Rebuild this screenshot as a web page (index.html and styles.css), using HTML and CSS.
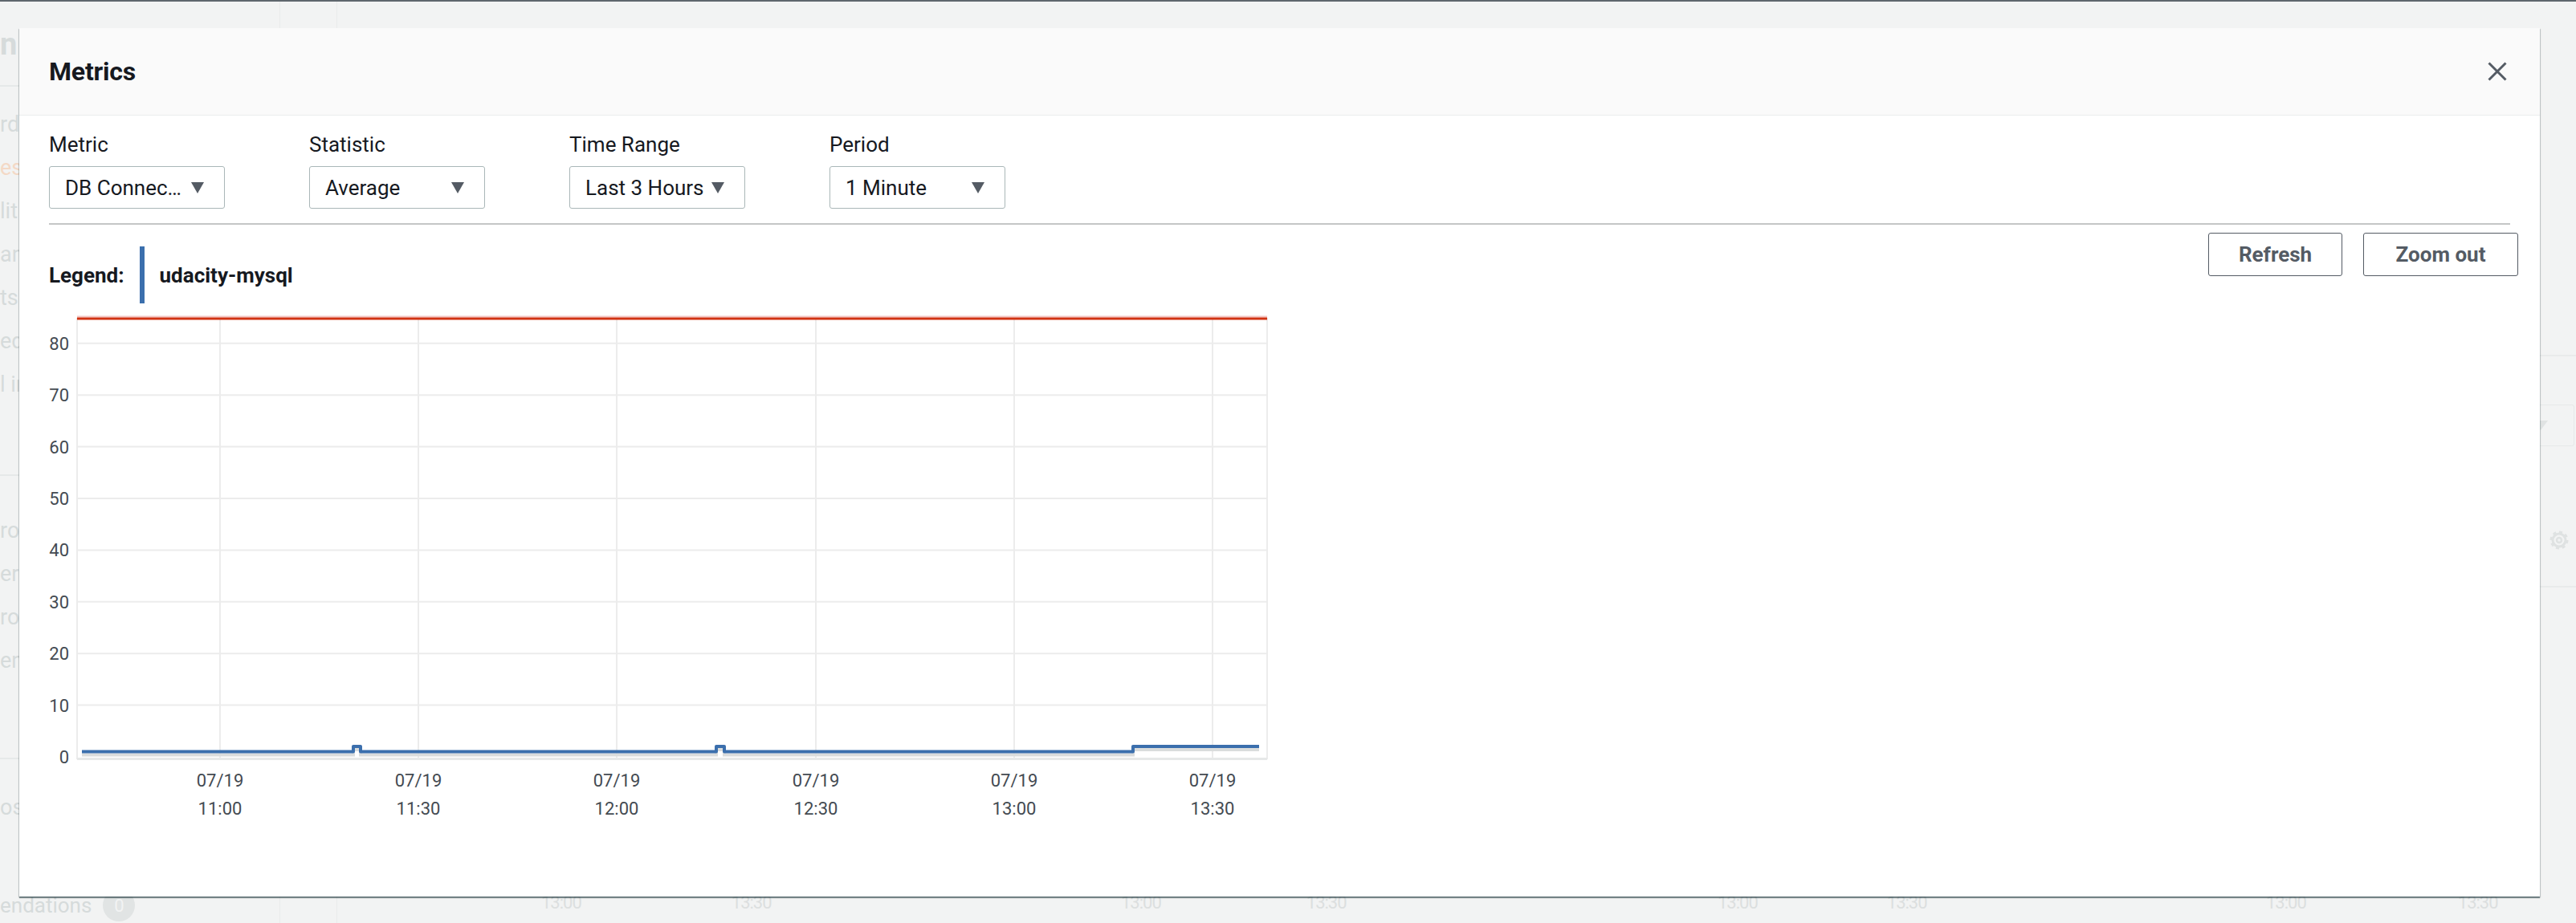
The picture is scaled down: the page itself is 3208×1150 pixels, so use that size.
FILE: index.html
```html
<!DOCTYPE html>
<html lang="en">
<head>
<meta charset="utf-8">
<title>Metrics</title>
<link rel="stylesheet" href="styles.css">
</head>
<body>
<div class="screen">
  <div class="page">
    <div class="side">
      <div class="side-title">n</div>
      <div class="side-group first">
        <div class="side-item">rd</div>
        <div class="side-item orange">es</div>
        <div class="side-item">lit</div>
        <div class="side-item">an</div>
        <div class="side-item">ts</div>
        <div class="side-item">ed</div>
        <div class="side-item">l in</div>
      </div>
      <div class="side-group second">
        <div class="side-item">ro</div>
        <div class="side-item">er</div>
        <div class="side-item">ro</div>
        <div class="side-item">en</div>
      </div>
      <div class="side-group last">
        <div class="side-item">os</div>
      </div>
      <div class="side-bottom"><span>endations</span><span class="badge">0</span></div>
    </div>
    <div class="gutter"></div>
    <div class="main">
      <div class="main-right">
        <div class="bg-dropdown"><span class="bg-caret"></span></div>
        <svg class="bg-gear" width="34" height="34" viewBox="0 0 34 34">
          <circle cx="17" cy="17" r="10" fill="none" stroke="#dfe2e2" stroke-width="3" stroke-dasharray="4 3.8"/>
          <circle cx="17" cy="17" r="8" fill="none" stroke="#dfe2e2" stroke-width="3"/>
          <circle cx="17" cy="17" r="3" fill="none" stroke="#dfe2e2" stroke-width="2.5"/>
        </svg>
      </div>
      <div class="bg-times">
        <div class="bg-panel p1"><span>13:00</span><span>13:30</span></div>
        <div class="bg-panel p2"><span>13:00</span><span>13:30</span></div>
        <div class="bg-panel p3"><span>13:00</span><span>13:30</span></div>
        <div class="bg-panel p4"><span>13:00</span><span>13:30</span></div>
      </div>
    </div>
  </div>

  <div class="modal">
    <div class="modal-header">
      <h2 class="modal-title">Metrics</h2>
      <svg class="close" width="24" height="24" viewBox="0 0 24 24">
        <path d="M1.5 1.5 L22.5 22.5 M22.5 1.5 L1.5 22.5" stroke="#545b64" stroke-width="3" fill="none"/>
      </svg>
    </div>
    <div class="modal-body">
      <div class="filters">
        <div class="field">
          <div class="field-label">Metric</div>
          <div class="select"><span class="select-text">DB Connec…</span><span class="caret"></span></div>
        </div>
        <div class="field">
          <div class="field-label">Statistic</div>
          <div class="select"><span class="select-text">Average</span><span class="caret"></span></div>
        </div>
        <div class="field">
          <div class="field-label">Time Range</div>
          <div class="select"><span class="select-text">Last 3 Hours</span><span class="caret"></span></div>
        </div>
        <div class="field">
          <div class="field-label">Period</div>
          <div class="select"><span class="select-text">1 Minute</span><span class="caret"></span></div>
        </div>
      </div>
      <div class="divider"></div>
      <div class="toolbar">
        <div class="legend">
          <span class="legend-label">Legend:</span>
          <span class="legend-bar"></span>
          <span class="legend-name">udacity-mysql</span>
        </div>
        <div class="buttons">
          <button class="btn btn-refresh">Refresh</button>
          <button class="btn btn-zoom">Zoom out</button>
        </div>
      </div>
      <svg class="chart" width="1530" height="640" viewBox="0 0 1530 640">
        <g stroke="#ececec" stroke-width="2" fill="none">
          <line x1="35" y1="37.8" x2="1517" y2="37.8"/>
          <line x1="35" y1="102.2" x2="1517" y2="102.2"/>
          <line x1="35" y1="166.6" x2="1517" y2="166.6"/>
          <line x1="35" y1="231" x2="1517" y2="231"/>
          <line x1="35" y1="295.4" x2="1517" y2="295.4"/>
          <line x1="35" y1="359.8" x2="1517" y2="359.8"/>
          <line x1="35" y1="424.2" x2="1517" y2="424.2"/>
          <line x1="35" y1="488.6" x2="1517" y2="488.6"/>
          <line x1="213" y1="6" x2="213" y2="556"/>
          <line x1="460" y1="6" x2="460" y2="556"/>
          <line x1="707" y1="6" x2="707" y2="556"/>
          <line x1="955" y1="6" x2="955" y2="556"/>
          <line x1="1202" y1="6" x2="1202" y2="556"/>
          <line x1="1449" y1="6" x2="1449" y2="556"/>
          <line x1="35" y1="6" x2="35" y2="556"/>
          <line x1="1517" y1="6" x2="1517" y2="556"/>
        </g>
        <line x1="35" y1="555.5" x2="1517" y2="555.5" stroke="#e6e8e8" stroke-width="3"/>
        <line x1="35" y1="4.5" x2="1517" y2="4.5" stroke="#f3c6c3" stroke-width="2"/>
        <line x1="35" y1="7" x2="1517" y2="7" stroke="#d13212" stroke-width="3"/>
        <polyline points="41,550.6 379,550.6 379,544 388,544 388,550.6 831,550.6 831,544 841,544 841,550.6 1350,550.6 1350,544 1507,544" fill="none" stroke="#dadcdc" stroke-width="4"/>
        <polyline points="41,546.6 379,546.6 379,540 388,540 388,546.6 831,546.6 831,540 841,540 841,546.6 1350,546.6 1350,540 1507,540" fill="none" stroke="#3b6fad" stroke-width="4" stroke-linejoin="round"/>
        <g class="axis-y" text-anchor="end">
          <text x="25" y="45.5">80</text>
          <text x="25" y="110">70</text>
          <text x="25" y="174.5">60</text>
          <text x="25" y="239">50</text>
          <text x="25" y="303">40</text>
          <text x="25" y="367.5">30</text>
          <text x="25" y="432">20</text>
          <text x="25" y="496.5">10</text>
          <text x="25" y="561">0</text>
        </g>
        <g class="axis-x" text-anchor="middle">
          <text x="213" y="590">07/19</text><text x="213" y="625">11:00</text>
          <text x="460" y="590">07/19</text><text x="460" y="625">11:30</text>
          <text x="707" y="590">07/19</text><text x="707" y="625">12:00</text>
          <text x="955" y="590">07/19</text><text x="955" y="625">12:30</text>
          <text x="1202" y="590">07/19</text><text x="1202" y="625">13:00</text>
          <text x="1449" y="590">07/19</text><text x="1449" y="625">13:30</text>
        </g>
      </svg>
    </div>
  </div>
</div>
</body>
</html>
```

FILE: styles.css
```css
* { box-sizing: border-box; }

html, body {
  margin: 0;
  padding: 0;
}

body {
  width: 3208px;
  height: 1150px;
  overflow: hidden;
  background: #f2f3f3;
  font-family: "Roboto", "Liberation Sans", sans-serif;
  color: #16191f;
}

.screen {
  position: relative;
  width: 3208px;
  height: 1150px;
  border-top: 2px solid #5f666d;
  overflow: hidden;
}

/* ---------- faded page behind the modal ---------- */
.page {
  display: flex;
  height: 1148px;
}

.side {
  width: 349px;
  flex-shrink: 0;
  border-right: 1px solid #e9ebeb;
  display: flex;
  flex-direction: column;
  color: #d6dbdb;
  font-size: 27px;
}

.side-title {
  font-size: 38px;
  font-weight: 700;
  line-height: 44px;
  padding-top: 31px;
  height: 106px;
  border-bottom: 2px solid #e6e9e9;
}

.side-group {
  border-bottom: 2px solid #e6e9e9;
}

.side-group.first {
  padding: 20px 0 85px;
}

.side-group.second {
  padding: 41px 0 94px;
}

.side-group.last {
  border-bottom: none;
  padding-top: 33px;
}

.side-item {
  line-height: 54px;
  white-space: nowrap;
}

.side-item.orange { color: #f4d9c6; }

.side-bottom {
  margin-top: auto;
  height: 44px;
  font-size: 26px;
  white-space: nowrap;
  display: flex;
  align-items: center;
  gap: 14px;
}

.badge {
  display: inline-flex;
  align-items: center;
  justify-content: center;
  width: 40px;
  height: 40px;
  border-radius: 50%;
  background: #e1e4e4;
  color: #f2f3f3;
  font-size: 22px;
}

.gutter {
  width: 71px;
  flex-shrink: 0;
  border-right: 1px solid #e9ebeb;
}

.main {
  flex: 1;
  min-width: 0;
  display: flex;
  flex-direction: column;
}

.main-right {
  align-self: flex-end;
  width: 70px;
  margin-top: 440px;
  border-top: 2px solid #e9ebeb;
  padding-top: 60px;
  display: flex;
  flex-direction: column;
  align-items: flex-end;
  border-bottom: 2px solid #e9ebeb;
  padding-bottom: 40px;
}

.bg-dropdown {
  width: 60px;
  height: 52px;
  border: 1px solid #e6e9e9;
  border-radius: 3px;
  display: flex;
  align-items: center;
  padding-left: 8px;
  margin-right: 2px;
}

.bg-caret {
  width: 0;
  height: 0;
  border-left: 9px solid transparent;
  border-right: 9px solid transparent;
  border-top: 12px solid #e0e3e3;
}

.bg-gear {
  margin-top: 100px;
  margin-right: 4px;
}

.bg-times {
  margin-top: auto;
  display: flex;
  height: 40px;
  color: #dcdfdf;
  font-size: 22px;
  letter-spacing: -1px;
}

.bg-panel {
  flex-shrink: 0;
  display: flex;
  padding-left: 254px;
  line-height: 30px;
}

.bg-panel.p1 { width: 722px; gap: 187px; }
.bg-panel.p2 { width: 743px; gap: 181px; }
.bg-panel.p3 { width: 683px; gap: 161px; }
.bg-panel.p4 { width: 600px; gap: 189px; }

/* ---------- modal ---------- */
.modal {
  position: absolute;
  left: 24px;
  top: 33px;
  width: 3139px;
  height: 1082px;
  background: #ffffff;
  box-shadow: 0 2px 1px 0 rgba(0, 28, 36, 0.45), 1px 1px 1px 0 rgba(0, 28, 36, 0.15), -1px 1px 1px 0 rgba(0, 28, 36, 0.15);
  display: flex;
  flex-direction: column;
}

.modal-header {
  height: 109px;
  background: #fafafa;
  border-bottom: 1px solid #eaeded;
  display: flex;
  align-items: center;
  justify-content: space-between;
  padding: 0 41px 0 37px;
}

.modal-title {
  margin: 0;
  font-size: 32px;
  font-weight: 700;
  color: #16191f;
  letter-spacing: -0.2px;
}

.close {
  display: block;
}

.modal-body {
  padding: 20px 37px 0 37px;
}

.filters {
  display: flex;
  gap: 105px;
}

.field {
  display: flex;
  flex-direction: column;
}

.field-label {
  font-size: 26px;
  line-height: 32px;
  margin-bottom: 11px;
  color: #16191f;
}

.select {
  width: 219px;
  height: 53px;
  border: 1px solid #aab7b8;
  border-radius: 3px;
  display: flex;
  align-items: center;
  justify-content: space-between;
  padding: 0 25px 0 19px;
}

.select-text {
  font-size: 26px;
  color: #16191f;
  white-space: nowrap;
}

.caret {
  width: 0;
  height: 0;
  border-left: 8.5px solid transparent;
  border-right: 8.5px solid transparent;
  border-top: 14px solid #545b64;
}

.divider {
  margin-top: 18px;
  height: 2px;
  background: #c4c6c6;
}

.toolbar {
  display: flex;
  justify-content: space-between;
  align-items: flex-start;
  margin-right: -10px;
}

.legend {
  margin-top: 27px;
  height: 71px;
  display: flex;
  align-items: center;
  gap: 19px;
  font-size: 26px;
  font-weight: 700;
  color: #16191f;
}

.legend-bar {
  width: 6px;
  height: 71px;
  background: #3b6fad;
}

.buttons {
  margin-top: 10px;
  display: flex;
  gap: 26px;
}

.btn {
  height: 54px;
  background: #ffffff;
  border: 1px solid #545b64;
  border-radius: 3px;
  font-family: "Roboto", "Liberation Sans", sans-serif;
  font-size: 26px;
  font-weight: 700;
  color: #545b64;
  padding: 0;
}

.btn-refresh { width: 167px; }
.btn-zoom { width: 193px; }

.chart {
  display: block;
  margin-top: 12px;
}

.chart text {
  font-family: "Roboto", "Liberation Sans", sans-serif;
  font-size: 22px;
  fill: #444b52;
}
```
